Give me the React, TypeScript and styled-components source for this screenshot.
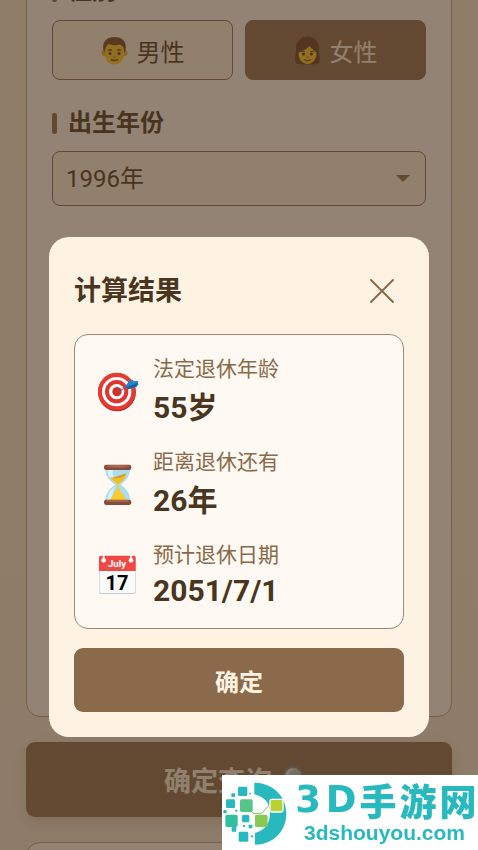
import React from 'react';
import styled, { createGlobalStyle } from 'styled-components';

const ink = '#4a3520';
const brown = '#8a6a4b';
const cream = '#fef3e3';
const paper = '#fef9f2';

const GlobalStyle = createGlobalStyle`
  *, *::before, *::after { box-sizing: border-box; }
  body {
    margin: 0;
    overflow: hidden;
    background: #f7ebd0;
    color: ${ink};
    font-family: Roboto, "Noto Sans CJK SC", sans-serif;
  }
  button, select { font: inherit; color: inherit; margin: 0; }
  h2, dl, dd, dt { margin: 0; padding: 0; }
  svg { display: block; flex: none; }
`;

const Page = styled.main`
  height: 100vh;
  overflow: hidden;
  padding: 0 26px;
  display: flex;
  flex-direction: column;
  gap: 25px;
  background: linear-gradient(180deg, #f7ebd2 0%, #f4e9da 100%);
`;

const Panel = styled.section`
  flex: none;
  border: 1px solid #b59d80;
  border-radius: 14px;
  background: ${paper};
  padding: 24px 25px;
`;

const FormPanel = styled(Panel)`
  margin-top: -50px;
  min-height: 767px;
`;

const MorePanel = styled(Panel)`
  height: 200px;
`;

const Heading = styled.h2`
  display: flex;
  align-items: center;
  gap: 11px;
  height: 32px;
  font-size: 24px;
  line-height: 32px;
  font-weight: 700;

  &::before {
    content: "";
    width: 5px;
    height: 21px;
    border-radius: 2px;
    background: ${brown};
  }
`;

const Options = styled.div`
  display: grid;
  grid-template-columns: 1fr 1fr;
  gap: 12px;
  margin: 13px 0 27px;
`;

const Option = styled.button<{ $active?: boolean }>`
  display: flex;
  align-items: center;
  justify-content: center;
  gap: 9px;
  height: 60px;
  border: 1px solid ${brown};
  border-radius: 8px;
  background: ${(p) => (p.$active ? brown : cream)};
  color: ${(p) => (p.$active ? cream : ink)};
  font-size: 24px;
`;

const SelectBox = styled.div`
  display: grid;
  align-items: center;
  margin-top: 12px;

  > * { grid-area: 1 / 1; }
  > svg { justify-self: end; margin-right: 16px; pointer-events: none; }
`;

const Select = styled.select`
  appearance: none;
  width: 100%;
  height: 55px;
  padding: 0 13px;
  border: 1px solid ${brown};
  border-radius: 8px;
  background: ${cream};
  font-size: 24px;
`;

const Submit = styled.button`
  flex: none;
  display: flex;
  align-items: center;
  justify-content: center;
  gap: 8px;
  height: 75px;
  border: 0;
  border-radius: 9px;
  background: ${brown};
  color: ${cream};
  font-size: 27px;
  font-weight: 700;
  box-shadow: 0 5px 14px rgba(138, 106, 75, 0.3);
`;

const Overlay = styled.div`
  position: fixed;
  inset: 0;
  padding: 237px 49px 0;
  background: rgba(74, 52, 32, 0.6);
`;

const Dialog = styled.div`
  padding: 26px 25px 25px;
  border-radius: 20px;
  background: ${cream};
`;

const DialogHeader = styled.header`
  display: flex;
  align-items: center;
  justify-content: space-between;
  height: 55px;
  margin-bottom: 16px;
`;

const DialogTitle = styled.h2`
  font-size: 27px;
  line-height: 36px;
  font-weight: 700;
`;

const Close = styled.button`
  display: grid;
  place-items: center;
  width: 44px;
  height: 44px;
  padding: 0;
  border: 0;
  background: none;
`;

const Results = styled.dl`
  display: flex;
  flex-direction: column;
  gap: 15px;
  padding: 18px 23px 17px;
  border: 1px solid #a08a70;
  border-radius: 14px;
  background: ${paper};
`;

const Result = styled.div`
  display: flex;
  align-items: center;
  gap: 15px;
`;

const Label = styled.dt`
  color: ${brown};
  font-size: 21px;
  line-height: 32px;
`;

const Value = styled.dd<{ $numeric?: boolean }>`
  font-size: 30px;
  line-height: ${(p) => (p.$numeric ? 40 : 46)}px;
  font-weight: 700;
`;

const Confirm = styled.button`
  width: 100%;
  height: 64px;
  margin-top: 19px;
  border: 0;
  border-radius: 9px;
  background: ${brown};
  color: ${cream};
  font-size: 24px;
  font-weight: 700;
`;

const Watermark = styled.aside`
  position: fixed;
  right: 0;
  bottom: 0;
  display: flex;
  align-items: center;
  gap: 4px;
  width: 256px;
  height: 75px;
  background: #fff;
  color: #27b9bd;
`;

const Brand = styled.div`
  flex: 1;
`;

const BrandName = styled.div`
  display: grid;
  grid-template-columns: 32px 34px repeat(3, 1fr);
  justify-items: center;
  font: 900 37px/40px "Noto Sans CJK SC", sans-serif;
`;

const BrandLetter = styled.span`
  font-family: "DejaVu Sans", sans-serif;
  font-weight: 700;
`;

const BrandSite = styled.div`
  padding-left: 12px;
  font: 700 21px/26px "Liberation Sans", sans-serif;
`;

function Man() {
  return (
    <svg width="27" height="30" viewBox="0 0 54 60" aria-hidden="true">
      <circle cx="7" cy="36" r="6" fill="#e5ae12" />
      <circle cx="47" cy="36" r="6" fill="#e5ae12" />
      <path d="M8 26C8 12 46 12 46 26V38C46 51 37 59 27 59S8 51 8 38Z" fill="#fccb20" />
      <path d="M5 32C1 12 13 4 27 4S53 12 49 32L46 34C46 24 42 21 38 19C29 22 20 20 15 18C10 23 8 27 8 34Z" fill="#704326" />
      <path d="M14 31Q18 28 22 31M32 31Q36 28 40 31" fill="none" stroke="#704326" strokeWidth="3" />
      <circle cx="18" cy="37" r="3" fill="#493321" /><circle cx="36" cy="37" r="3" fill="#493321" />
      <path d="M24 44H30" stroke="#d89010" strokeWidth="3" />
      <path d="M20 49Q27 53 34 49" fill="none" stroke="#80421e" strokeWidth="3" />
    </svg>
  );
}

function Woman() {
  return (
    <svg width="27" height="30" viewBox="0 0 54 60" aria-hidden="true">
      <path d="M4 56C0 47 5 37 4 27C4 12 15 3 27 3S50 12 50 27C49 37 54 47 50 56C44 60 10 60 4 56Z" fill="#65391f" />
      <path d="M9 36C9 25 17 23 27 19C37 23 45 26 45 36C45 50 36 58 27 58S9 50 9 36Z" fill="#fccb20" />
      <path d="M8 36C8 22 17 14 26 17C37 17 47 26 46 36C39 31 34 26 31 22C25 29 17 31 8 36Z" fill="#65391f" />
      <circle cx="19" cy="38" r="3" fill="#493321" /><circle cx="35" cy="38" r="3" fill="#493321" />
      <path d="M14 34Q18 31 22 34M32 34Q36 31 40 34" fill="none" stroke="#704326" strokeWidth="2" />
      <path d="M25 44H29" stroke="#d89010" strokeWidth="3" />
      <path d="M20 49Q27 54 34 49" fill="none" stroke="#a33d21" strokeWidth="3" />
    </svg>
  );
}

function Target() {
  return (
    <svg width="40" height="40" viewBox="0 0 120 120" aria-hidden="true">
      <circle cx="57" cy="61" r="57" fill="#c82b27" />
      <circle cx="56" cy="58" r="56" fill="#e63b35" />
      <circle cx="56" cy="59" r="44" fill="#fff" />
      <circle cx="56" cy="59" r="35" fill="#e03430" />
      <circle cx="56" cy="59" r="23" fill="#fff" />
      <circle cx="57" cy="59" r="14" fill="#d52f2a" />
      <path d="M58 60L93 42" stroke="#4a6f96" strokeWidth="3" />
      <path d="M82 42L96 25Q104 19 107 28L119 27Q123 36 115 44L91 52Z" fill="#1d86cd" />
      <path d="M84 46L118 33Q121 38 115 44L91 52Z" fill="#1464a7" />
    </svg>
  );
}

function Hourglass() {
  return (
    <svg width="40" height="42" viewBox="0 0 120 126" aria-hidden="true">
      <path d="M22 12H96C97 40 82 50 68 62C84 73 98 88 96 114H22C20 88 36 73 52 62C36 50 21 40 22 12Z" fill="#a9def1" />
      <path d="M28 14H46C41 33 49 48 58 59C43 50 27 39 28 14ZM28 111C27 89 39 77 51 68C44 82 41 97 43 111Z" fill="#d3f2fa" />
      <path d="M36 42C50 45 66 38 84 29C84 44 70 53 60 62C51 54 42 50 36 42Z" fill="#f6bd20" />
      <path d="M36 42C53 40 67 34 84 28C79 42 59 45 36 42Z" fill="#d59b24" />
      <path d="M60 68L87 111H33Z" fill="#fbca30" />
      <path d="M58 60H62V106H58Z" fill="#fbca30" />
      <rect x="18" y="2" width="82" height="16" rx="7" fill="#874b39" />
      <ellipse cx="59" cy="7" rx="36" ry="4" fill="#a96953" />
      <rect x="18" y="107" width="82" height="16" rx="7" fill="#874b39" />
      <path d="M26 111H92" stroke="#b0735f" strokeWidth="4" />
    </svg>
  );
}

function Calendar() {
  return (
    <svg width="40" height="40" viewBox="0 0 120 120" aria-hidden="true">
      <rect x="3" y="3" width="110" height="114" rx="5" fill="#c7cdd2" />
      <rect x="5" y="5" width="106" height="109" rx="4" fill="#fafafa" />
      <path d="M3 48V8Q3 2 9 2H107Q113 2 113 8V48Z" fill="#f04842" />
      <path d="M17 0V14M99 0V14" stroke="#fff" strokeWidth="5" />
      <circle cx="17" cy="16" r="7" fill="#fff" /><circle cx="99" cy="16" r="7" fill="#fff" />
      <text x="57" y="37" textAnchor="middle" fill="#fff" fontFamily="Roboto, sans-serif" fontSize="29" fontWeight="700">July</text>
      <text x="57" y="104" textAnchor="middle" fill="#000" fontFamily="Roboto, sans-serif" fontSize="60" fontWeight="700">17</text>
    </svg>
  );
}

function Magnifier() {
  return (
    <svg width="34" height="34" viewBox="0 0 68 68" aria-hidden="true">
      <path d="M37 41L56 60" stroke="#555" strokeWidth="9" strokeLinecap="round" />
      <circle cx="26" cy="26" r="19" fill="#b8c6c4" stroke="#78807c" strokeWidth="5" />
      <path d="M14 24Q16 13 27 13" fill="none" stroke="#e5f0ee" strokeWidth="4" />
    </svg>
  );
}

function Logo() {
  return (
    <svg width="66" height="66" viewBox="21 115 198 198" aria-hidden="true">
      <path d="M118 123C174 123 214 164 214 216S174 309 120 309V274C151 265 165 244 165 214S149 166 118 158Z" fill="#27b9bd" />
      <path d="M93 192L115 215H140L162 191H184" fill="none" stroke="#7cc66a" strokeWidth="3" />
      <g fill="#27b9bd">
        <rect x="69" y="135" width="28" height="28" rx="4" /><rect x="33" y="173" width="27" height="26" rx="4" />
        <rect x="81" y="220" width="22" height="22" rx="4" /><rect x="71" y="270" width="29" height="30" rx="4" />
        <rect x="49" y="155" width="11" height="11" rx="2" /><rect x="103" y="153" width="5" height="5" rx="1" />
        <rect x="25" y="205" width="10" height="10" rx="2" /><rect x="50" y="256" width="14" height="14" rx="2" />
        <rect x="101" y="249" width="11" height="11" rx="2" /><rect x="61" y="204" width="6" height="6" rx="1" />
        <rect x="84" y="250" width="6" height="6" rx="1" /><rect x="108" y="281" width="6" height="6" rx="1" />
      </g>
      <rect x="31" y="219" width="37" height="37" rx="5" fill="#32bfa0" />
      <rect x="75" y="173" width="38" height="38" rx="5" fill="#55c58a" />
      <rect x="120" y="219" width="38" height="37" rx="5" fill="#88c956" />
      <rect x="165" y="173" width="39" height="38" rx="5" fill="#b6d331" stroke="#fff" strokeWidth="4" />
    </svg>
  );
}

const results = [
  { icon: <Target />, label: '法定退休年龄', value: '55岁' },
  { icon: <Hourglass />, label: '距离退休还有', value: '26年' },
  { icon: <Calendar />, label: '预计退休日期', value: '2051/7/1', numeric: true },
];

export default function App() {
  return (
    <>
      <GlobalStyle />
      <Page>
        <FormPanel>
          <Heading>性别</Heading>
          <Options>
            <Option type="button" aria-pressed="false"><Man />男性</Option>
            <Option type="button" aria-pressed="true" $active><Woman />女性</Option>
          </Options>
          <Heading as="label" htmlFor="birth-year">出生年份</Heading>
          <SelectBox>
            <Select id="birth-year" defaultValue="1996">
              <option value="1996">1996年</option>
            </Select>
            <svg width="14" height="7" viewBox="0 0 14 7" aria-hidden="true">
              <path d="M0 0H14L7 7Z" fill={brown} />
            </svg>
          </SelectBox>
        </FormPanel>
        <Submit type="button">确定查询<Magnifier /></Submit>
        <MorePanel />
      </Page>
      <Overlay>
        <Dialog role="dialog" aria-modal="true" aria-labelledby="result-title">
          <DialogHeader>
            <DialogTitle id="result-title">计算结果</DialogTitle>
            <Close type="button" aria-label="关闭">
              <svg width="26" height="26" viewBox="0 0 26 26" aria-hidden="true">
                <path d="M2 2L24 24M24 2L2 24" stroke={brown} strokeWidth="2" strokeLinecap="round" />
              </svg>
            </Close>
          </DialogHeader>
          <Results>
            {results.map((r) => (
              <Result key={r.label}>
                {r.icon}
                <div>
                  <Label>{r.label}</Label>
                  <Value $numeric={r.numeric}>{r.value}</Value>
                </div>
              </Result>
            ))}
          </Results>
          <Confirm type="button">确定</Confirm>
        </Dialog>
      </Overlay>
      <Watermark>
        <Logo />
        <Brand>
          <BrandName>
            <BrandLetter>3</BrandLetter>
            <BrandLetter>D</BrandLetter>
            <span>手</span>
            <span>游</span>
            <span>网</span>
          </BrandName>
          <BrandSite>3dshouyou.com</BrandSite>
        </Brand>
      </Watermark>
    </>
  );
}
